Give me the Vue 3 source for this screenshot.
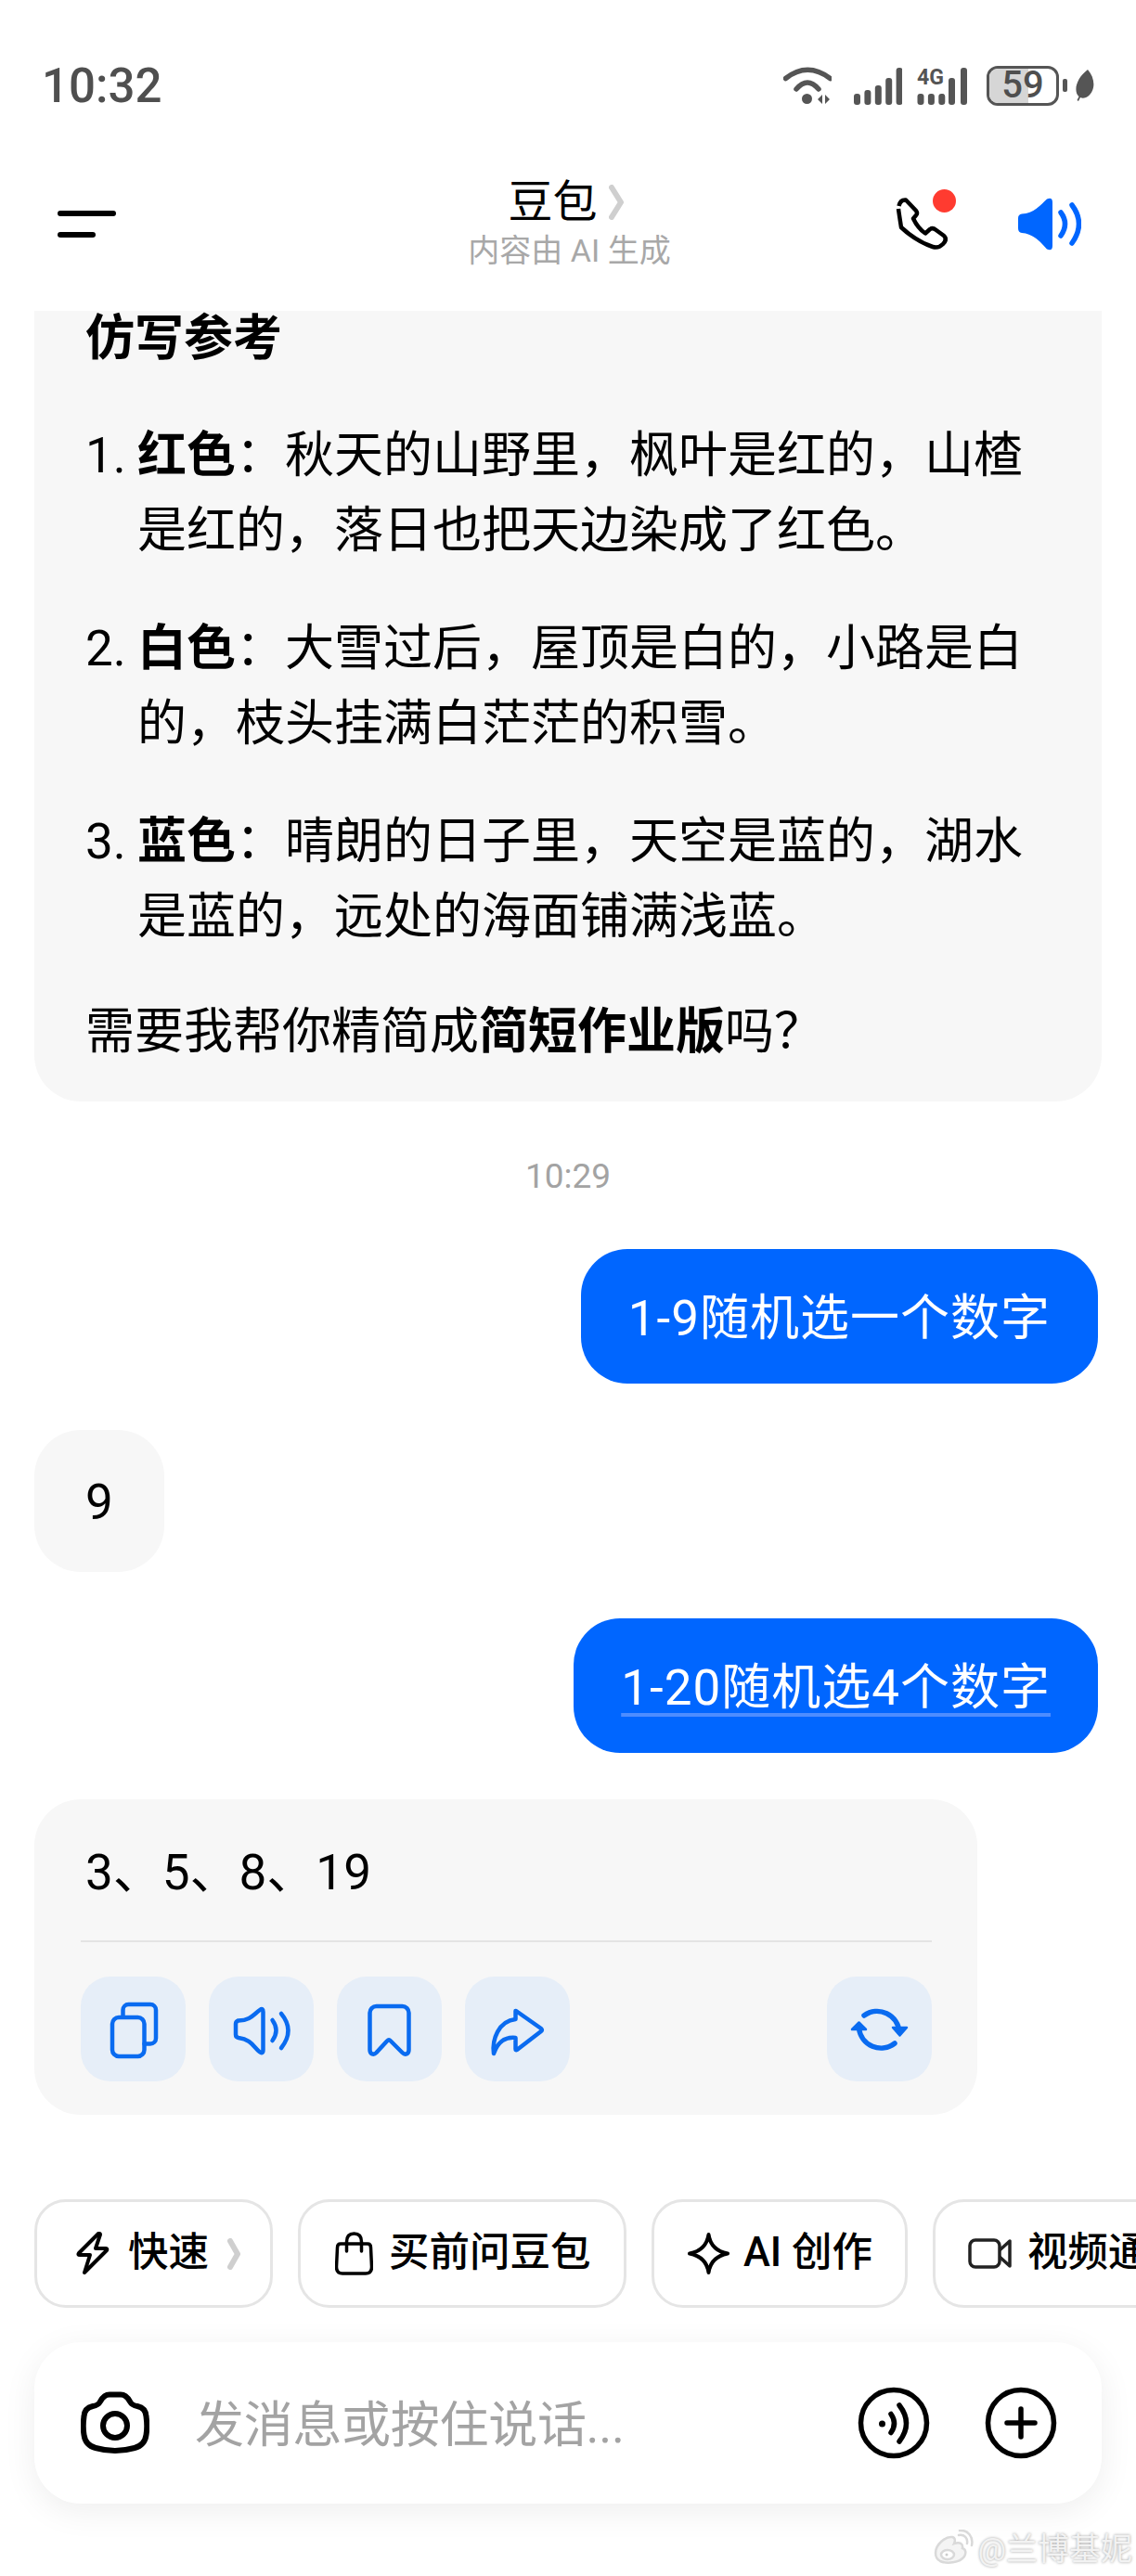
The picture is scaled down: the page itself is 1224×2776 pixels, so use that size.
<script setup>
// 对话页面的静态数据
const battery = 59
const signalBars = [
  { x: 0, h: 12 },
  { x: 11.4, h: 16 },
  { x: 22.8, h: 21 },
  { x: 34.2, h: 29 },
  { x: 45.6, h: 40 }
]
const items = [
  { key: '红色', text: '秋天的山野里，枫叶是红的，山楂是红的，落日也把天边染成了红色。' },
  { key: '白色', text: '大雪过后，屋顶是白的，小路是白的，枝头挂满白茫茫的积雪。' },
  { key: '蓝色', text: '晴朗的日子里，天空是蓝的，湖水是蓝的，远处的海面铺满浅蓝。' }
]
</script>

<template>
  <div class="phone">
    <div class="status-bar">
      <span class="time">10:32</span>
      <div class="status-icons">
        <svg class="wifi" width="52" height="42" viewBox="0 0 52 42">
          <path d="M2.5 13.5Q26-5 50.500 13.500" fill="none" stroke="#555" stroke-width="5.500" stroke-linecap="round" />
          <path d="M14 25Q26 11 38 25" fill="none" stroke="#555" stroke-width="5.500" stroke-linecap="round" />
          <circle cx="25.500" cy="35.500" r="5.500" fill="#555" />
          <path d="M42 31v10l-5-5zM45 31v10l5-5z" fill="#555" />
        </svg>
        <svg class="signal" width="52" height="41" viewBox="0 0 52 41">
          <rect v-for="bar in signalBars" :key="bar.x" :x="bar.x" :y="41 - bar.h" width="7" :height="bar.h" rx="3" fill="#555" />
        </svg>
        <svg class="signal-4g" width="60" height="41" viewBox="0 0 60 41">
          <text x="0" y="19" font-size="24" font-weight="700" font-family="Roboto, sans-serif" fill="#555" textLength="29" lengthAdjust="spacingAndGlyphs">4G</text>
          <rect v-for="bar in signalBars.slice(0, 3)" :key="bar.x" :x="bar.x + 0.500" y="29" width="7" height="12" rx="3" fill="#555" />
          <rect x="34" y="12" width="7" height="29" rx="3" fill="#555" />
          <rect x="47" y="1" width="7" height="40" rx="3" fill="#555" />
        </svg>
        <div class="battery">
          <div class="battery-fill" :style="{ width: battery + '%' }"></div>
          <span class="battery-num">{{ battery }}</span>
        </div>
        <div class="battery-nub"></div>
        <svg class="leaf" width="22" height="34" viewBox="0 0 22 34">
          <path d="M15 0C23 9 24 22 15 29 12 31 9 31 7 30L5 34 3.500 33 5.500 29C-1 23 3 9 15 0Z" fill="#555" />
        </svg>
      </div>
    </div>

    <header class="header">
      <div class="menu">
        <span class="menu-long"></span>
        <span class="menu-short"></span>
      </div>
      <div class="title-wrap">
        <div class="title">
          豆包
          <svg class="title-arrow" width="16" height="38" viewBox="0 0 16 38">
            <path d="M3 3L13 19 3 35" fill="none" stroke="#cfcfcf" stroke-width="6" stroke-linecap="round" stroke-linejoin="round" />
          </svg>
        </div>
        <div class="subtitle">内容由 AI 生成</div>
      </div>
      <div class="header-right">
        <div class="phone-icon">
          <svg width="56" height="56" viewBox="0 0 56 56">
            <path d="M3.500 9Q5 2 11 2.500L22 14Q24 17 22 19L19 22.500Q24 33 32 38.500L37 34Q40 32 43 34.500L52 41Q56 45 51 50 46 55 40 53 22 47 6 32 3.500 16 3 12 3.500 9Z" fill="none" stroke="#000" stroke-width="4.500" stroke-linejoin="round" />
          </svg>
          <span class="red-dot"></span>
        </div>
        <svg class="speaker" width="68" height="57" viewBox="0 0 68 57">
          <path d="M31 1.500Q37-1 37 5V52Q37 58 31 55.500C24 48 17 39 4 38Q0 37.500 0 33V22Q0 18 4 17.500C17 17 24 8 31 1.500Z" fill="#0066ff" />
          <path d="M46 16Q55 28 46 41M58 8Q73 28 58 49" fill="none" stroke="#0066ff" stroke-width="5.500" stroke-linecap="round" />
        </svg>
      </div>
    </header>

    <main class="chat">
      <section class="card reply-card">
        <h3 class="card-title">仿写参考</h3>
        <ol class="list">
          <li v-for="(item, i) in items" :key="item.key" class="list-item">
            <span class="list-num">{{ i + 1 }}.</span>
            <p class="list-text"><b>{{ item.key }}</b>：{{ item.text }}</p>
          </li>
        </ol>
        <p class="ask">需要我帮你精简成<b>简短作业版</b>吗？</p>
      </section>

      <div class="stamp">10:29</div>

      <div class="bubble user first">1-9随机选一个数字</div>
      <div class="bubble bot">9</div>
      <div class="bubble user"><span class="linked">1-20随机选4个数字</span></div>

      <section class="card answer-card">
        <p class="answer">3、5、8、19</p>
        <div class="divider"></div>
        <div class="actions">
          <button class="action">
            <svg width="113" height="113" viewBox="0 0 113 113" fill="none" stroke="#0a6bf0" stroke-width="4.500" stroke-linecap="round" stroke-linejoin="round">
              <rect x="34" y="44" width="34.500" height="42" rx="7" />
              <path d="M45.500 43V36a6 6 0 0 1 6-6H75a6 6 0 0 1 6 6v30.500a6 6 0 0 1-6 6h-6.500" />
            </svg>
          </button>
          <button class="action">
            <svg width="113" height="113" viewBox="0 0 113 113" fill="none" stroke="#0a6bf0" stroke-width="4.500" stroke-linecap="round" stroke-linejoin="round">
              <path d="M55 36Q58.500 33.500 58.500 38V79Q58.500 84 54.500 81C48 76 46 68 32 66Q29 65.500 29 62.500V51Q29 48 32 47.500C45 47 48 41 55 36Z" />
              <path d="M68.500 47Q76.500 58 68.500 69M78 40Q93 58 78 77" />
            </svg>
          </button>
          <button class="action">
            <svg width="113" height="113" viewBox="0 0 113 113" fill="none" stroke="#0a6bf0" stroke-width="4.500" stroke-linecap="round" stroke-linejoin="round">
              <path d="M35.500 39a7 7 0 0 1 7-7h28a7 7 0 0 1 7 7V79C77.500 83.500 73.500 85 70.500 82L58 69.500Q56 67.500 54 69.500L42.500 82C39.500 85 35.500 83.500 35.500 79Z" />
            </svg>
          </button>
          <button class="action">
            <svg width="113" height="113" viewBox="0 0 113 113" fill="none" stroke="#0a6bf0" stroke-width="4.500" stroke-linecap="round" stroke-linejoin="round">
              <path d="M55 37L82 56Q83.500 57.500 82 59L56 79Q54.500 80 54.500 78V66C44 65 36 69 31 83 29 68 36 48 54.500 46V37Z" />
            </svg>
          </button>
          <button class="action refresh">
            <svg width="113" height="113" viewBox="0 0 113 113" fill="none">
              <path d="M40 42A24 24 0 0 1 78 60M34.500 56A24 24 0 0 0 73 72" stroke="#0a6bf0" stroke-width="5.500" stroke-linecap="round" />
              <path d="M71 55H86L78.500 63.500ZM27 57H42L34.500 49.500Z" fill="#0a6bf0" stroke="#0a6bf0" stroke-width="2.500" stroke-linejoin="round" />
            </svg>
          </button>
        </div>
      </section>

      <div class="chips">
        <div class="chip chip-fast">
          <svg width="36" height="47" viewBox="0 0 36 47" fill="none" stroke="#000" stroke-width="4" stroke-linejoin="round">
            <path d="M24 2L3 23Q1.500 25 4 25H15L9 44 33 20Q34 18 31.500 18H21L26 3Q26 1.500 24 2Z" />
          </svg>
          <span>快速</span>
          <svg width="14" height="34" viewBox="0 0 14 34">
            <path d="M3 3L11 17 3 31" fill="none" stroke="#cfcfcf" stroke-width="6" stroke-linecap="round" stroke-linejoin="round" />
          </svg>
        </div>
        <div class="chip chip-buy">
          <svg width="41" height="47" viewBox="0 0 41 47" fill="none" stroke="#000" stroke-width="3.500" stroke-linecap="round" stroke-linejoin="round">
            <path d="M6 13H35Q38.500 13 38.500 17L39.500 38Q39.500 45 33 45H8Q1.500 45 1.500 38L2.500 17Q2.500 13 6 13Z" />
            <path d="M12.500 21V11Q12.500 2 20.500 2T28.500 11V21" />
          </svg>
          <span>买前问豆包</span>
        </div>
        <div class="chip chip-ai">
          <svg width="47" height="47" viewBox="0 0 47 47" fill="none" stroke="#000" stroke-width="4" stroke-linejoin="round">
            <path d="M23.500 3Q26 20 44 23.500 26 27 23.500 44 21 27 3 23.500 21 20 23.500 3Z" />
          </svg>
          <span>AI 创作</span>
        </div>
        <div class="chip chip-video">
          <svg width="47" height="33" viewBox="0 0 47 33" fill="none" stroke="#222" stroke-width="3.500" stroke-linejoin="round">
            <rect x="2" y="2" width="32" height="29" rx="6" />
            <path d="M34 13L45 3V30L34 20" />
          </svg>
          <span>视频通话</span>
        </div>
      </div>

      <div class="input-bar">
        <svg class="camera" width="74" height="68" viewBox="0 0 74 68" fill="none" stroke="#000" stroke-width="6">
          <path d="M21 11Q25 3.500 31 3.500H43Q49 3.500 53 11 55 15 61 16 70 18 70.500 27 72 38 70.500 47 69 58 58 61 37 67 16 61 5 58 3.500 47 2 38 3.500 27 4 18 13 16 19 15 21 11Z" stroke-linejoin="round" />
          <circle cx="37" cy="37" r="13" />
        </svg>
        <span class="placeholder">发消息或按住说话...</span>
        <svg width="78" height="78" viewBox="0 0 78 78" fill="none" stroke="#000" stroke-width="5.500" stroke-linecap="round">
          <circle cx="39" cy="39" r="35.500" />
          <circle cx="26.500" cy="40" r="3.500" fill="#000" stroke="none" />
          <path d="M36 29.500Q43 39.500 36 49.500M45 20Q60 39.500 45 59" />
        </svg>
        <svg class="plus" width="78" height="78" viewBox="0 0 78 78" fill="none" stroke="#000" stroke-width="5.500" stroke-linecap="round">
          <circle cx="39" cy="39" r="35.500" />
          <path d="M39 24V54M24 39H54" />
        </svg>
      </div>

      <div class="watermark">
        <svg width="44" height="38" viewBox="0 0 44 38" fill="none" stroke="#d9d9d9" stroke-width="2.500" stroke-linecap="round">
          <path d="M3 25C3 16 14 7 21 8 25 9 24 13 23 15 29 13 33 15 32 20 36 21 36 26 34 29 29 36 15 37 8 34 4 32 3 29 3 25Z" fill="#f4f4f4" />
          <ellipse cx="16" cy="27" rx="7" ry="5" fill="#fff" />
          <circle cx="15" cy="27" r="1.500" fill="#ccc" stroke="none" />
          <path d="M28 6C34 5 38 9 37 15M29 1C38 0 44 8 42 17" />
        </svg>
        <span>@兰博基妮</span>
      </div>
    </main>
  </div>
</template>

<style scoped>
.phone {
  width: 1224px;
  height: 2776px;
  overflow: hidden;
  background: #fff;
  color: #000;
  font-family: Roboto, "Noto Sans CJK SC", sans-serif;
}

.status-bar {
  height: 184px;
  padding: 0 45px 0 45px;
  box-sizing: border-box;
  display: flex;
  align-items: center;
  justify-content: space-between;
}

.time {
  font-size: 51px;
  font-weight: 500;
  color: #4f4f4f;
}

.status-icons {
  display: flex;
  align-items: center;
}

.signal {
  margin-left: 24px;
}

.signal-4g {
  margin-left: 16px;
  overflow: visible;
}

.battery {
  position: relative;
  margin-left: 15px;
  width: 78px;
  height: 43px;
  box-sizing: border-box;
  border: 3.5px solid #555;
  border-radius: 12px;
  overflow: hidden;
  display: flex;
  align-items: center;
  justify-content: center;
}

.battery-fill {
  position: absolute;
  left: 0;
  top: 0;
  bottom: 0;
  background: #d6d6d6;
}

.battery-num {
  position: relative;
  font-size: 40px;
  line-height: 36px;
  font-weight: 500;
  color: #4f4f4f;
}

.battery-nub {
  margin-left: 4px;
  width: 5px;
  height: 14px;
  border-radius: 2px;
  background: #555;
}

.leaf {
  margin-left: 7px;
}

.header {
  height: 151px;
  padding: 0 59px 0 62px;
  display: grid;
  grid-template-columns: 1fr auto 1fr;
  box-sizing: border-box;
}

.menu {
  margin-top: 43px;
  display: flex;
  flex-direction: column;
  gap: 17px;
}

.menu span {
  display: block;
  height: 6px;
  border-radius: 3px;
  background: #000;
}

.menu-long {
  width: 63px;
}

.menu-short {
  width: 41px;
}

.title-wrap {
  display: flex;
  flex-direction: column;
  align-items: center;
  padding-top: 9px;
}

.title {
  display: flex;
  align-items: center;
  gap: 12px;
  font-size: 48px;
  line-height: 50px;
  margin-left: -8px;
}

.subtitle {
  margin-top: 7px;
  font-size: 34px;
  line-height: 40px;
  color: #a8a8a8;
}

.header-right {
  display: flex;
  justify-content: flex-end;
  align-items: flex-start;
  gap: 76px;
  padding-top: 29px;
}

.phone-icon {
  position: relative;
  width: 56px;
  height: 56px;
}

.red-dot {
  position: absolute;
  left: 40px;
  top: -9px;
  width: 25px;
  height: 25px;
  border-radius: 50%;
  background: #ff3b30;
}

.chat {
  padding: 0 37px;
}

.card {
  background: #f7f7f7;
  border-radius: 50px;
}

.reply-card {
  padding: 2px 60px 34px 55px;
  border-radius: 0 0 50px 50px;
  font-size: 53px;
  line-height: 81px;
}

.card-title {
  margin: 0 0 58px;
  font-size: 53px;
  line-height: 56px;
  font-weight: 700;
}

.list {
  margin: 0;
  padding: 0;
  list-style: none;
  display: flex;
  flex-direction: column;
  gap: 46px;
}

.list-item {
  display: flex;
}

.list-num {
  flex: none;
  width: 56px;
}

.list-text {
  margin: 0;
}

.ask {
  margin: 43px 0 0;
}

.stamp {
  margin-top: 59px;
  font-size: 37px;
  line-height: 44px;
  text-align: center;
  color: #a3a3a3;
}

.bubble {
  width: fit-content;
  font-size: 53px;
  line-height: 81px;
  border-radius: 50px;
}

.bubble.user {
  margin: 50px 4px 0 auto;
  padding: 35px 51px 29px;
  background: #0066ff;
  color: #fff;
  letter-spacing: 1px;
}

.bubble.first {
  margin-top: 56px;
}

.bubble.bot {
  margin-top: 50px;
  padding: 38px 55px 34px;
  background: #f7f7f7;
}

.linked {
  text-decoration: underline;
  text-decoration-color: #4d8dff;
  text-decoration-thickness: 4px;
  text-underline-offset: 9px;
}

.answer-card {
  margin-top: 50px;
  width: 1016px;
  padding: 39px 49px 36px 50px;
  box-sizing: border-box;
}

.answer {
  margin: 0 0 0 5px;
  font-size: 53px;
  line-height: 81px;
}

.divider {
  margin-top: 32px;
  height: 2px;
  background: #e4e4e4;
}

.actions {
  margin-top: 37px;
  display: flex;
  gap: 25px;
}

.action {
  width: 113px;
  height: 113px;
  padding: 0;
  border: none;
  border-radius: 32px;
  background: #e6eef8;
}

.action svg {
  display: block;
}

.refresh {
  margin-left: auto;
}

.chips {
  margin: 91px -37px 0 0;
  display: flex;
  gap: 27px;
  overflow: hidden;
}

.chip {
  flex: none;
  height: 117px;
  box-sizing: border-box;
  border: 3px solid #e5e5e5;
  border-radius: 34px;
  display: flex;
  align-items: center;
  font-size: 43.500px;
  font-weight: 500;
  white-space: nowrap;
}

.chip span {
  padding-bottom: 10px;
}

.chip-fast {
  width: 257px;
  padding-left: 42px;
  gap: 20px;
}

.chip-buy {
  width: 354px;
  padding-left: 37px;
  gap: 17px;
}

.chip-ai {
  width: 276px;
  padding-left: 35px;
  gap: 14px;
}

.chip-video {
  width: 300px;
  padding-left: 35px;
  gap: 17px;
}

.input-bar {
  margin-top: 37px;
  height: 174px;
  padding: 0 48px 0 50px;
  border-radius: 50px;
  background: #fff;
  box-shadow: 0 8px 36px rgba(0, 0, 0, 0.07);
  display: flex;
  align-items: center;
  box-sizing: border-box;
}

.placeholder {
  flex: 1;
  margin-left: 49px;
  padding-bottom: 4px;
  font-size: 53px;
  letter-spacing: -0.3px;
  color: #a3a3a3;
}

.plus {
  margin-left: 59px;
}

.watermark {
  margin: 22px -33px 0 0;
  display: flex;
  justify-content: flex-end;
  align-items: center;
  gap: 4px;
  font-size: 34px;
  color: #f2f2f2;
  text-shadow: 0 0 3px #9a9a9a;
}
</style>

<style>
body {
  background: #fff;
}
</style>
